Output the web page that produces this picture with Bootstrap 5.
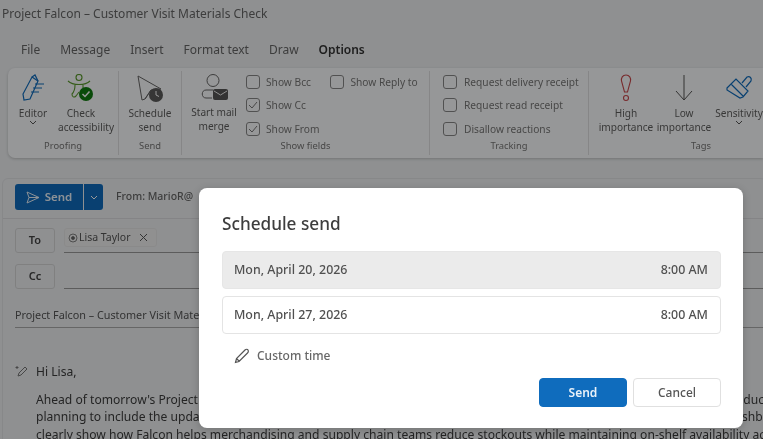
<!DOCTYPE html>
<html lang="en"><head><meta charset="utf-8"><title>Schedule send</title>
<link href="https://cdn.jsdelivr.net/npm/bootstrap@5.3.0/dist/css/bootstrap.min.css" rel="stylesheet">
<style>
html,body{height:439px;overflow:hidden}
body{background:#eef0f2;color:#555;font-family:"Noto Sans","Open Sans",sans-serif;font-size:11px;position:relative}
.ttl,.tabrow,.rib,.mail,.sched{filter:blur(.35px)}
.ttl{font-size:12px;line-height:16px;padding:6px 0 0 2px;height:28px;color:#666;white-space:nowrap}
.tabrow{height:40px;padding:14px 0 0 21px;gap:20px;font-size:12px;line-height:16px;color:#666}
.tabrow .nav-link{padding:0;color:inherit}
.tabrow .nav-link.active{color:#333;font-weight:600;position:relative}
.tabrow .nav-link.active::after{content:"";position:absolute;left:1px;right:0;bottom:-4px;height:2px;background:#0f6cbd}
.rib{margin-left:8px;height:90px;background:#fbfcfd;border-radius:7px 0 0 7px;box-shadow:0 1px 3px rgba(0,0,0,.2);font-size:10.1px;line-height:14px;color:#5e5e5e}
.grp{flex:none;border-right:1px solid #dfe0e2;margin:3px 0 0;height:84px;padding-top:3px;position:relative}
.grp:last-child{border:0}
.g1{width:111px}.g2{width:63px}.g3{width:248px}.g4{width:159px}.g5{width:174px}
.cap{position:absolute;left:0;right:0;top:69px;text-align:center;font-size:9.4px;line-height:12px;color:#777}
.cap.tags{padding-left:50px}
.rbtn{flex:none;text-align:center;white-space:nowrap}
.rbtn svg{display:block;margin:0 auto 4px}
.w50{width:50px}.w46{width:46px}.w64{width:64px}.w58{width:58px}.w52{width:52px}
.ckcol{margin-top:-4px}
.ck{display:flex;align-items:center;gap:6px;height:23.5px;white-space:nowrap;color:#777;font-size:10.2px}
.ckb{width:14px;height:14px;border:1px solid #888;border-radius:3px;flex:none;display:flex;align-items:center;justify-content:center}
.g4{padding-left:13px}
.g4 .ck{gap:7px}
.col2{margin-left:11px}
.mail{position:absolute;left:2px;right:-4px;top:178px;bottom:-20px;border:1px solid #e2e3e5;border-radius:6px 6px 0 0;padding:5px 0 0 12px;color:#4d4d4d;font-size:11px}
.sendsplit{height:26px;gap:1px}
.sendmain{width:68px;background:#0f6cbd;color:#eaf2fa;border-radius:3px 0 0 3px;font-weight:600;font-size:11.5px;gap:5px}
.sendchev{width:19px;background:#0f6cbd;border-radius:0 3px 3px 0}
.frm{margin-left:13px;font-weight:500;color:#666;font-size:10.5px;padding-top:5px}
.hdr{height:35px;border-bottom:1px solid #dcdde0;margin:0 -4px 0 -12px;padding:0 0 8px 12px}
.rcp{height:36px}
.rcp.first{height:45px;padding-top:9px}
.lbl{width:40px;height:25px;border:1px solid #d6d6d6;border-radius:3px;font-weight:600;flex:none;font-size:11px;color:#444}
.line{flex:1;border-bottom:1px solid #9a9a9a;height:25px;margin-left:9px}
.chip{width:93px;height:19px;background:#f0f0f0;border:1px solid #e6e6e6;border-radius:3px;padding-left:3px;font-size:10.5px;color:#555;gap:1px;line-height:15px}
.chip .xx{margin-left:7px}
.subj{height:28px;border-bottom:1px solid #aaa;padding-top:5px;font-size:10.8px;color:#555;white-space:nowrap;line-height:20px}
.bodyt{margin-top:35px;position:relative;padding-left:21px;font-size:12.1px;line-height:17.6px;color:#3c3c3c;white-space:nowrap}
.hi{margin-bottom:10px}
.spark{position:absolute;left:0;top:2px}
.sched{position:absolute;z-index:1060;left:199px;top:188px;width:544px;height:240px;padding:23px 22px 0 23px;border:0;border-radius:8px;background:#fff;color:#444;box-shadow:0 2px 8px rgba(0,0,0,.2);font-size:12px}
.sched>*{flex:none}
.sched h2{font-size:17.2px;line-height:26px;font-weight:500;margin:0 0 14px;color:#3d3d3d}
.drow{height:38px;padding:0 12px 0 11px;border:1px solid #e4e4e4;border-radius:4px;margin-bottom:7px;font-weight:500;color:#505050;width:100%;font-size:12.4px}
.drow.sel{background:#ebebeb;border-color:#e6e6e6}
.cust{height:32px;margin:-1px 0 0 12px;gap:8px;color:#666;font-weight:500;font-size:12px}
.acts{margin-top:6px;gap:6px}
.acts .btn{width:88px;height:29px;padding:0;font-size:12px;font-weight:600;border-radius:4px}
.bsend{background:#0f6cbd;border-color:#0f6cbd;color:#e8f1f9}
.bcancel{background:#fff;border:1px solid #e0e0e0;color:#555;font-weight:500!important}
.dim{background:rgba(0,0,0,.4);opacity:1}
</style></head><body>
<div class="ttl">Project Falcon – Customer Visit Materials Check</div>
<nav class="nav tabrow">
<a class="nav-link" href="#">File</a><a class="nav-link" href="#">Message</a><a class="nav-link" href="#">Insert</a><a class="nav-link" href="#">Format text</a><a class="nav-link" href="#">Draw</a><a class="nav-link active" href="#">Options</a>
</nav>
<div class="rib d-flex">
 <div class="grp g1 d-flex">
  <div class="rbtn w50"><svg width="26" height="28" viewBox="0 0 26 28" fill="none" stroke="#0f6cbd" stroke-width="1.2"><path d="M12 3l6 4-8 18-6 1-1-6z"/><path d="M12 3l3-2 3 6M15 10h9M13 14h9M11 18h8"/></svg>Editor<br><svg width="8" height="5" viewBox="0 0 8 5" fill="none" stroke="#555"><path d="M1 1l3 3 3-3"/></svg></div>
  <div class="rbtn w46"><svg width="30" height="28" viewBox="0 0 30 28" fill="none" stroke="#5a9a2e" stroke-width="1.1"><circle cx="13" cy="3.500" r="3"/><path d="M2 7c3 3 7 3.500 11 3.500s8-.5 11-3.500M9 11c0 5-1 7-3 9 0 3 2 4 4 2l3-4M17 11v3"/><circle cx="20" cy="20" r="7" fill="#107c10" stroke="none"/><path d="M16.500 20l2.500 2.500 4.500-5" stroke="#fff" stroke-width="1.500"/></svg>Check<br>accessibility</div>
  <div class="cap">Proofing</div>
 </div>
 <div class="grp g2 d-flex justify-content-center">
  <div class="rbtn"><svg width="30" height="28" viewBox="0 0 30 28" fill="none" stroke="#666" stroke-width="1"><path d="M3 2l23 13-10 1-6 9-3 1zM10 25l6-9"/><circle cx="21" cy="21" r="7" fill="#5a5a5a" stroke="none"/><path d="M21 17v4l3 1.500" stroke="#fff"/></svg>Schedule<br>send</div>
  <div class="cap">Send</div>
 </div>
 <div class="grp g3 d-flex">
  <div class="rbtn w64"><svg width="30" height="27" viewBox="0 0 30 27" fill="none" stroke="#666" stroke-width="1"><circle cx="14" cy="6.500" r="6"/><path d="M13 24H7c-5 0-5-8 0-8h7"/><rect x="14" y="15" width="15" height="11" rx="2" fill="#555" stroke="none"/><path d="M15 17l6.500 4 6.500-4" stroke="#eee"/></svg>Start mail<br>merge</div>
  <div class="ckcol">
   <div class="ck"><span class="ckb"></span>Show Bcc</div>
   <div class="ck"><span class="ckb"><svg width="10" height="8" viewBox="0 0 10 8" fill="none" stroke="#777"><path d="M1 4l3 3 5-6"/></svg></span>Show Cc</div>
   <div class="ck"><span class="ckb"><svg width="10" height="8" viewBox="0 0 10 8" fill="none" stroke="#777"><path d="M1 4l3 3 5-6"/></svg></span>Show From</div>
  </div>
  <div class="ckcol col2"><div class="ck"><span class="ckb"></span>Show Reply to</div></div>
  <div class="cap">Show fields</div>
 </div>
 <div class="grp g4">
  <div class="ckcol">
  <div class="ck"><span class="ckb"></span>Request delivery receipt</div>
  <div class="ck"><span class="ckb"></span>Request read receipt</div>
  <div class="ck"><span class="ckb"></span>Disallow reactions</div>
  </div>
  <div class="cap">Tracking</div>
 </div>
 <div class="grp g5 d-flex ps-2">
  <div class="rbtn w58"><svg width="14" height="28" viewBox="0 0 14 28" fill="none" stroke="#c8484c" stroke-width="1.100"><path d="M7 1c3.500 0 5 3 4.500 6L8.500 18h-3L2.500 7C2 4 3.500 1 7 1z"/><circle cx="7" cy="24" r="2.500"/></svg>High<br>importance</div>
  <div class="rbtn w58"><svg width="18" height="28" viewBox="0 0 18 28" fill="none" stroke="#555" stroke-width="1"><path d="M9 1v25M1 17l8 9 8-9"/></svg>Low<br>importance</div>
  <div class="rbtn w52"><svg width="28" height="28" viewBox="0 0 28 28" fill="none" stroke="#0f6cbd" stroke-width="1.200"><path d="M2 14l9-9 12 12-5 6-3 1-13-8zM6 10l12 12M17 9l5-6c3-1 5 1 4 4l-5 6"/></svg>Sensitivity<br><svg width="8" height="5" viewBox="0 0 8 5" fill="none" stroke="#555"><path d="M1 1l3 3 3-3"/></svg></div>
  <div class="cap tags">Tags</div>
 </div>
</div>
<div class="mail">
 <div class="hdr d-flex align-items-start">
  <div class="sendsplit d-flex">
   <div class="sendmain d-flex align-items-center justify-content-center"><svg width="14" height="13" viewBox="0 0 14 13" fill="none" stroke="#eaf2fa"><path d="M1 1l12 5.500L1 12l2-5.500zM3 6.500h10"/></svg>Send</div>
   <div class="sendchev d-flex align-items-center justify-content-center"><svg width="8" height="5" viewBox="0 0 8 5" fill="none" stroke="#fff"><path d="M1 1l3 3 3-3"/></svg></div>
  </div>
  <div class="frm">From: MarioR@</div>
 </div>
 <div class="rcp first d-flex align-items-start">
  <div class="lbl d-flex align-items-center justify-content-center">To</div>
  <div class="line d-flex align-items-start"><div class="chip d-flex align-items-center"><svg width="10" height="10" viewBox="0 0 10 10" fill="none" stroke="#666" stroke-width=".8"><circle cx="5" cy="5" r="4"/><circle cx="5" cy="5" r="1.500" fill="#666"/></svg>Lisa Taylor<svg class="xx" width="9" height="9" viewBox="0 0 9 9" stroke="#555"><path d="M1 1l7 7M8 1l-7 7"/></svg></div></div>
 </div>
 <div class="rcp d-flex align-items-start">
  <div class="lbl d-flex align-items-center justify-content-center">Cc</div>
  <div class="line"></div>
 </div>
 <div class="subj">Project Falcon – Customer Visit Materials Check</div>
 <div class="bodyt">
  <svg class="spark" width="14" height="13" viewBox="0 0 14 13" fill="none" stroke="#777"><path d="M3 11l1-3 6-6 2 2-6 6zM2 1v3M.5 2.500h3"/></svg>
  <div class="hi">Hi Lisa,</div>
  <div>Ahead of tomorrow's Project Falcon customer visit, I wanted to confirm that we have all final materials in place, including product</div>
  <div>planning to include the updated Falcon overview, the customer impact summary, the pilot results and the latest inventory dashboard</div>
  <div>clearly show how Falcon helps merchandising and supply chain teams reduce stockouts while maintaining on-shelf availability across</div>
 </div>
</div>
<div class="modal-backdrop dim"></div>
<div class="modal-content sched">
 <h2>Schedule send</h2>
 <div class="drow sel d-flex align-items-center justify-content-between"><span>Mon, April 20, 2026</span><span>8:00 AM</span></div>
 <div class="drow d-flex align-items-center justify-content-between"><span>Mon, April 27, 2026</span><span>8:00 AM</span></div>
 <div class="cust d-flex align-items-center"><svg width="15" height="16" viewBox="0 0 15 16" fill="none" stroke="#555" stroke-width="1.200"><path d="M1.500 14.500l1-4L11 2c1-1 2.500-1 3 0s.5 2-.5 3L5 13.500zM2.500 10.500l3 3"/></svg>Custom time</div>
 <div class="acts d-flex justify-content-end">
  <button class="btn bsend">Send</button><button class="btn bcancel">Cancel</button>
 </div>
</div>
</body></html>
